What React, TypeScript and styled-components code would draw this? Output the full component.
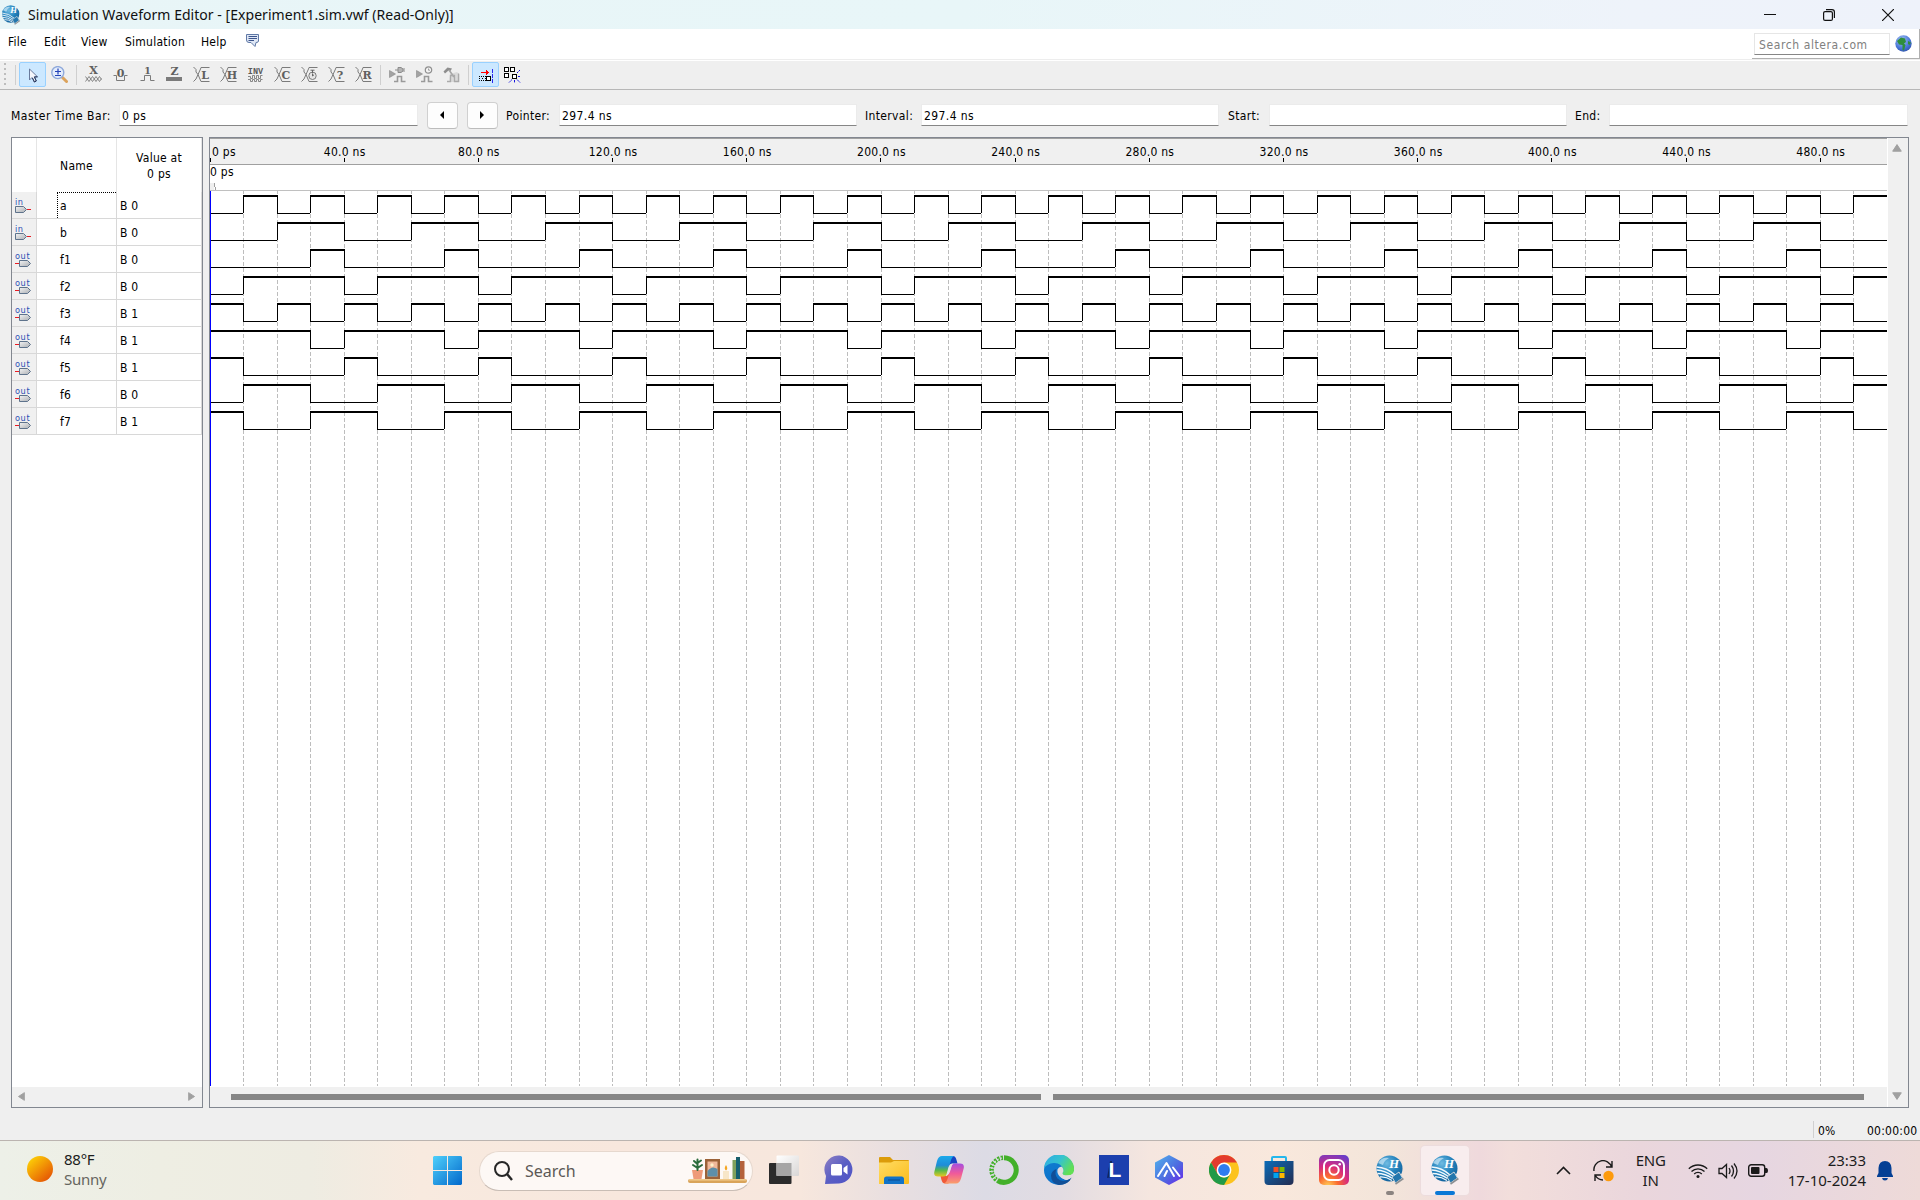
import React from "react";
import styled, { createGlobalStyle } from "styled-components";

const GlobalStyle = createGlobalStyle`
  * { box-sizing: border-box; }
  body { margin: 0; overflow: hidden; background: #efefef; }
  svg { display: block; flex: none; }
`;

const tahoma = `"DejaVu Sans Condensed", "DejaVu Sans", sans-serif`;
const segoe = `"Noto Sans", "Open Sans", sans-serif`;

const Screen = styled.div`
  width: 1920px;
  height: 1200px;
  display: flex;
  flex-direction: column;
  background: #efefef;
  color: #000;
  font: 12px/16px ${tahoma};
  letter-spacing: 0.25px;
  overflow: hidden;
  white-space: nowrap;
`;

/* ---------- title bar ---------- */
const TitleBar = styled.header`
  height: 29px;
  flex: none;
  display: flex;
  align-items: center;
  padding: 0 26px 0 1px;
  background: linear-gradient(90deg, #e8f5f7 0%, #e8f6f8 50%, #eef3fa 85%, #eef2fa 100%);
`;
const Title = styled.h1`
  margin: 0 auto 0 7px;
  font: 400 14px/20px ${segoe};
  letter-spacing: 0.04px;
  color: #101010;
`;
const WindowControls = styled.div`
  display: flex;
  gap: 47px;
`;

/* ---------- menu ---------- */
const MenuBar = styled.nav`
  height: 32px;
  flex: none;
  display: flex;
  align-items: flex-start;
  background: linear-gradient(#fff 30px, #ededed 30px, #ededed 31px, #fff 31px);
  padding-left: 8px;
`;
const MenuItem = styled.span<{ $w: number }>`
  width: ${(p) => p.$w}px;
  margin-top: 5px;
`;
const BubbleSlot = styled.span`
  margin-top: 4px;
`;
const AlteraSearch = styled.div`
  margin-left: auto;
  width: 168px;
  height: 30px;
  display: flex;
  align-items: center;
  padding-left: 2px;
  gap: 5px;
  border-right: 1px solid #b0b0b0;
  border-bottom: 1px solid #b0b0b0;
`;
const SearchField = styled.div`
  width: 136px;
  height: 22px;
  padding: 3px 4px;
  border: 1px solid #e6e6e6;
  border-bottom-color: #868686;
  color: #808080;
  letter-spacing: 0.6px;
`;

/* ---------- toolbar ---------- */
const ToolBar = styled.div`
  height: 29px;
  flex: none;
  display: flex;
  align-items: flex-start;
  padding: 1px 0 0 4px;
  border-bottom: 1px solid #b7b7b7;
`;
const Grip = styled.div`
  width: 2px;
  height: 24px;
  margin-top: 1px;
  background: repeating-linear-gradient(#bdbdbd 0 2px, transparent 2px 5px);
`;
const ToolSep = styled.div<{ $l: number; $r: number }>`
  width: 1px;
  height: 20px;
  margin: 3px ${(p) => p.$r}px 0 ${(p) => p.$l}px;
  background: #cfcfcf;
`;
const ToolButton = styled.button<{ $on?: boolean }>`
  width: 27px;
  height: 25px;
  padding: 0;
  display: flex;
  align-items: center;
  justify-content: center;
  border: 1px solid ${(p) => (p.$on ? "#99d1ff" : "transparent")};
  border-radius: 2px;
  background: ${(p) => (p.$on ? "#cce8ff" : "transparent")};
`;

/* ---------- time row ---------- */
const TimeRow = styled.div`
  height: 47px;
  flex: none;
  display: flex;
  align-items: center;
  padding: 4px 12px 0 11px;
`;
const TimeLabel = styled.label<{ $w: number; $ls?: number }>`
  width: ${(p) => p.$w}px;
  letter-spacing: ${(p) => p.$ls ?? 0.35}px;
`;
const TimeField = styled.div<{ $w: number }>`
  width: ${(p) => p.$w}px;
  height: 22px;
  padding: 3px 2px;
  background: #fff;
  border: 1px solid #ebebeb;
  border-bottom-color: #868686;
  margin-top: -1px;
  letter-spacing: 0.4px;
`;
const StepButton = styled.button`
  width: 31px;
  height: 27px;
  margin-left: 9px;
  padding: 0 2px 2px 0;
  display: flex;
  align-items: center;
  justify-content: center;
  background: #fdfdfd;
  border: 1px solid #d0d0d0;
  border-bottom-color: #bcbcbc;
  border-radius: 4px;
`;
const Gap = styled.span<{ $w: number }>`
  flex: 0 0 ${(p) => p.$w}px;
`;

/* ---------- work area ---------- */
const WorkArea = styled.main`
  flex: none;
  height: 971px;
  display: flex;
  gap: 6px;
  padding: 0 11px 0 11px;
`;
const SignalPanel = styled.section`
  width: 192px;
  flex: none;
  display: flex;
  flex-direction: column;
  background: #fff;
  border: 1px solid #828790;
`;
const SignalHead = styled.div`
  height: 54px;
  flex: none;
  display: grid;
  grid-template-columns: 25px 80px 85px;
`;
const HeadCell = styled.div`
  display: flex;
  align-items: center;
  justify-content: center;
  text-align: center;
  padding-top: 2px;
  border-right: 1px solid #e5e5e5;
`;
const SignalRow = styled.div`
  height: 27px;
  flex: none;
  display: grid;
  grid-template-columns: 25px 80px 85px;
`;
const IconCell = styled.div`
  background: #f0f0f0;
  border-right: 1px solid #d8d8d8;
  border-bottom: 1px solid #d8d8d8;
  padding: 5px 0 0 3px;
`;
const NameCell = styled.div<{ $focus?: boolean }>`
  border-right: 1px solid #d8d8d8;
  border-bottom: 1px solid #d8d8d8;
  padding-left: 20px;
  & > span {
    display: block;
    height: 26px;
    padding: ${(p) => (p.$focus ? "5px 0 0 2px" : "6px 0 0 3px")};
    border: 0 dotted #000;
    border-width: ${(p) => (p.$focus ? "1px 0 0 1px" : "0")};
  }
`;
const ValueCell = styled.div`
  border-right: 1px solid #d8d8d8;
  border-bottom: 1px solid #d8d8d8;
  padding: 6px 0 0 3px;
`;
const PanelScroll = styled.div`
  margin-top: auto;
  height: 20px;
  display: flex;
  align-items: center;
  justify-content: space-between;
  padding: 0 6px 1px 5px;
  background: #f0f0f0;
`;

const WavePanel = styled.section`
  flex: 1;
  display: flex;
  border: 1px solid #828790;
  background: #fff;
`;
const WaveMain = styled.div`
  width: 1677px;
  flex: none;
  display: flex;
  flex-direction: column;
`;
const Ruler = styled.div`
  height: 27px;
  flex: none;
  display: flex;
  overflow: hidden;
  background: #f0f0f0;
  border-top: 1px solid #a0a0a0;
  border-bottom: 1px solid #a0a0a0;
`;
const RulerCell = styled.div<{ $first?: boolean }>`
  flex: 0 0 ${(p) => (p.$first ? 67.1 : 134.2)}px;
  display: flex;
  flex-direction: column;
  align-items: ${(p) => (p.$first ? "flex-start" : "center")};
  padding-top: 5px;
  & > span {
    height: 14px;
    padding-left: ${(p) => (p.$first ? 2 : 1)}px;
  }
  & > i {
    width: 1px;
    height: 4px;
    background: #000;
  }
`;
const TimeBarStrip = styled.div`
  height: 26px;
  flex: none;
  display: flex;
  flex-direction: column;
  justify-content: space-between;
  border-bottom: 1px solid #c0c0c0;
  & > span {
    margin-top: -1px;
  }
`;
const ScrollTrack = styled.div`
  height: 20px;
  flex: none;
  margin-top: 1px;
  display: flex;
  align-items: center;
  gap: 12px;
  padding: 0 23px 1px 21px;
  background: #f0f0f0;
`;
const ScrollBar = styled.div<{ $w: number }>`
  width: ${(p) => p.$w}px;
  height: 6px;
  background: #868686;
`;
const VScroll = styled.div`
  flex: 1;
  margin-left: 1px;
  display: flex;
  flex-direction: column;
  justify-content: space-between;
  align-items: center;
  padding: 5px 2px 6px 0;
  background: #f0f0f0;
`;

/* ---------- status ---------- */
const StatusBar = styled.footer`
  height: 32px;
  flex: none;
  display: flex;
  justify-content: flex-end;
  align-items: flex-end;
  padding-bottom: 2px;
`;
const Percent = styled.div`
  width: 54px;
  height: 17px;
  padding-left: 4px;
  line-height: 21px;
  border-left: 1px solid #d0d0d0;
`;
const Clock = styled.div`
  width: 53px;
  height: 17px;
  line-height: 21px;
`;

/* ---------- taskbar ---------- */
const TaskBar = styled.div`
  height: 60px;
  flex: none;
  display: flex;
  align-items: center;
  border-top: 1px solid #bbb4b0;
  background: linear-gradient(
    90deg,
    #edf0e8 0px, #eeeee3 160px, #eeece2 310px, #f8eadf 420px, #f8e7dd 620px, #f7e7dd 800px,
    #e9dfe0 890px, #dcdbe5 985px, #e2dce2 1060px, #f5e6df 1150px, #f9e8dc 1280px,
    #f3e5da 1390px, #efd9dc 1480px, #f2dedb 1510px, #ead6dc 1640px, #e6d6e1 1760px, #eedad8 1920px
  );
  font: 15px/20px ${segoe};
  letter-spacing: 0;
`;
const Weather = styled.div`
  width: 433px;
  display: flex;
  align-items: center;
  gap: 11px;
  padding: 0 0 3px 27px;
`;
const TwoLine = styled.div<{ $align?: string; $dim?: boolean; $ls?: number }>`
  text-align: ${(p) => p.$align ?? "left"};
  line-height: 20px;
  color: #1c1c1c;
  letter-spacing: ${(p) => p.$ls ?? 0}px;
  margin-top: -1px;
  & > div:last-child {
    color: ${(p) => (p.$dim ? "#66665f" : "#1c1c1c")};
  }
`;
const SearchPill = styled.div`
  width: 274px;
  height: 40px;
  margin: 0 15px 0 17px;
  display: flex;
  align-items: center;
  padding: 0 5px 0 14px;
  border: 1px solid #e6d8ce;
  border-bottom-color: #c9bdb5;
  border-radius: 20px;
  background: #fdf8f5;
  font-size: 16px;
  color: #5c5856;
  & > span { margin: 0 auto 0 12px; }
`;
const Apps = styled.div`
  display: flex;
  gap: 7.050px;
  margin-left: -8px;
`;
const AppSlot = styled.div<{ $active?: boolean }>`
  width: 48px;
  height: 49px;
  padding-top: 9px;
  display: flex;
  flex-direction: column;
  align-items: center;
  justify-content: space-between;
  border-radius: 4px;
  background: ${(p) => (p.$active ? "#f8edee" : "transparent")};
  box-shadow: ${(p) => (p.$active ? "0 0 1px 1px #ecdcdd" : "none")};
`;
const Indicator = styled.div<{ $active?: boolean }>`
  width: ${(p) => (p.$active ? 20 : 8)}px;
  height: 4px;
  border-radius: 2px;
  background: ${(p) => (p.$active ? "#0a78d6" : "#8b8480")};
`;
const Tray = styled.div`
  margin-left: auto;
  padding-right: 27px;
  display: flex;
  align-items: center;
`;
const TrayIcon = styled.div<{ $r: number }>`
  margin-right: ${(p) => p.$r}px;
`;

/* ---------- icons ---------- */
const Quartus = ({ size }: { size: number }) => (
  <svg width={size} height={size} viewBox="0 0 30 30">
    <defs>
      <radialGradient id="qs" cx="0.4" cy="0.3" r="0.8">
        <stop offset="0" stopColor="#6fbbe2" />
        <stop offset="0.5" stopColor="#2583bd" />
        <stop offset="1" stopColor="#0e5a94" />
      </radialGradient>
    </defs>
    <circle cx="14.5" cy="13.5" r="13" fill="url(#qs)" />
    <path d="M1.600 12 Q12 12.500 20 20 M1.600 15 Q10 15.500 18.500 21.500 M2.500 18.500 Q10 18.500 17.500 23.500 M5 22 Q11 21.500 17 25.500" fill="none" stroke="#f2f9fd" strokeWidth="1.300" />
    <path d="M3 8 Q7 1.500 14 3 Q9 5.500 8 10 Z" fill="#c6e4f4" opacity=".75" />
    <text x="14" y="12.5" fontFamily="Liberation Serif" fontStyle="italic" fontWeight="bold" fontSize="13" fill="#fff">H</text>
    <path d="M17 22 L24 17 L27.500 23 L20.500 28 Z" fill="#2376ad" stroke="#cdd6db" strokeWidth="1" />
    <path d="M20.500 29 L28.400 23.500" stroke="#8b8f92" strokeWidth="1.600" />
  </svg>
);

const G = "#7b7b7b";
const Glyph = ({ x, y, size = 11, children }: { x: number; y: number; size?: number; children: string }) => (
  <text x={x} y={y} textAnchor="middle" fontFamily="DejaVu Serif" fontWeight="bold" fontSize={size} letterSpacing="0" fill="#606060">
    {children}
  </text>
);
const ToolSvg = ({ children }: { children: React.ReactNode }) => (
  <svg width="17" height="17" viewBox="0 0 17 17">{children}</svg>
);
const Cross = () => (
  <path d="M.5 1 L3 3.5 L3 6 L5 8.5 L8 15.5 M.5 15.5 L3 13 L5 8.5 L7.5 3 L8 1.5 H16.5 M8 15.5 H16.5" fill="none" stroke={G} />
);
const XIcon = ({ letter }: { letter: string }) => (
  <ToolSvg>
    <Cross />
    <Glyph x={12} y={12.5}>{letter}</Glyph>
  </ToolSvg>
);

const Cursor = () => (
  <svg width="17" height="17" viewBox="0 0 17 17">
    <path d="M5.5 3 V14 L8 11.5 L10.2 16 L12.3 15 L10.2 10.8 H13.5 Z" fill="#f4f6fb" stroke="#6a7a9c" />
    <path d="M8.5 12 L10.5 16 L12.3 15 L10.5 11 L13.5 10.8" fill="none" stroke="#26365c" />
  </svg>
);
const Zoom = () => (
  <svg width="17" height="17" viewBox="0 0 17 17">
    <path d="M11.5 11.5 L15.5 15.5" stroke="#dca35c" strokeWidth="3" strokeLinecap="round" />
    <circle cx="6.8" cy="6.6" r="6" fill="#e3ecfc" stroke="#8fa9da" strokeWidth="1.4" />
    <path d="M4 5.5 H10 M7 2.5 V8.5 M4 9.5 H10" stroke="#2242b8" strokeWidth="1.2" />
  </svg>
);
const ForceX = () => (
  <ToolSvg>
    <Glyph x={8.5} y={8}>X</Glyph>
    <path d="M.5 10.500 L4 15.500 L7.500 10.500 L11 15.500 L14.500 10.500 L16.500 13.500 M.5 15.500 L4 10.500 L7.500 15.500 L11 10.500 L14.500 15.500 L16.500 12.500" fill="none" stroke={G} strokeWidth=".9" />
  </ToolSvg>
);
const Force0 = () => (
  <ToolSvg>
    <path d="M1.5 9.5 H4.5 V14.5 H12.5 V9.5 H15.5" fill="none" stroke={G} />
    <Glyph x={8.5} y={10.5}>0</Glyph>
  </ToolSvg>
);
const Force1 = () => (
  <ToolSvg>
    <path d="M1.5 14.500 H5.500 V9.500 H11.500 V14.500 H15.500" fill="none" stroke={G} />
    <Glyph x={8.5} y={8} size={9.500}>1</Glyph>
  </ToolSvg>
);
const ForceZ = () => (
  <ToolSvg>
    <Glyph x={8.5} y={8.5}>Z</Glyph>
    <rect x="0" y="11" width="16" height="4" fill={G} />
  </ToolSvg>
);
const Invert = () => (
  <ToolSvg>
    <text x="8.5" y="7.5" textAnchor="middle" fontFamily="Liberation Mono" fontWeight="bold" fontSize="8.500" letterSpacing="0" fill="#5a5a5a">INV</text>
    <path d="M1 10.5 H3.5 V12.5 H5.5 V9.5 H7.5 V12.5 H9.5 V9.5 H11.5 V12.5 H13.5 V9.5 H15.5 M1 13.5 H3.5 V15.5 H5.5 V13.5 H7.5 V15.5 H9.5 V13.5 H11.5 V15.5 H13.5 V13.5 H15.5" fill="none" stroke={G} strokeWidth=".9" />
  </ToolSvg>
);
const ClockIcon = () => (
  <ToolSvg>
    <Cross />
    <circle cx="11.5" cy="9.8" r="3.7" fill="#e6e6e6" stroke={G} />
    <path d="M11.5 4 V7 M9.5 4.2 H13.5 M11.5 10 V7.5 M11.5 10 L13 8.8" stroke="#666" />
  </ToolSvg>
);
const SimRun = ({ kind }: { kind: "plug" | "clock" }) => (
  <ToolSvg>
    <path d="M.5 4.500 L6.500 8 L.5 11.500 Z" fill="#a3a3a3" stroke="#888" strokeWidth=".6" />
    <path d="M5 15.5 H8.5 V10.5 H12.5 V15.5 H16.5" fill="none" stroke="#9a9a9a" strokeWidth="1.6" />
    {kind === "plug" ? (
      <path d="M6 4 H9 M9 1.5 H12 L14 3 V5 L12 6.5 H9 Z M14 3 H16 M14 5 H16" fill="#b5b5b5" stroke="#8b8b8b" />
    ) : (
      <>
        <circle cx="12.5" cy="4" r="3.2" fill="#f3f3f3" stroke="#8f8f8f" strokeWidth="1.2" />
        <path d="M12.5 2.5 V4.2 H14" stroke="#8b8b8b" strokeWidth=".8" fill="none" />
      </>
    )}
  </ToolSvg>
);
const Hammer = () => (
  <ToolSvg>
    <path d="M7 8 L14 6 L16.5 8.5 V16 H6.5 V12" fill="#dadada" />
    <path d="M.5 5.5 L4.5 1.5 L9 2.5 L7.5 5 L5.5 4.5 L2 7.5 Z" fill="#8e8e8e" />
    <path d="M6 4 L11 11" stroke="#a5a5a5" strokeWidth="1.6" />
    <path d="M4 15.5 H7.5 V9.5 H11.5 V15.5 H15.5 V7.5" fill="none" stroke="#aaa" strokeWidth="1.3" />
  </ToolSvg>
);
const SnapEdge = () => (
  <svg width="17" height="17" viewBox="0 0 17 17" shapeRendering="crispEdges">
    <path d="M4 6.500 H11" stroke="#f00" />
    <path d="M9 4 L12 6.500 L9 9 Z" fill="#f00" />
    <path d="M2 10.500 H9 M2 14.500 H9" stroke="#000" strokeDasharray="1 1" />
    <path d="M2 12.500 H9" stroke="#000" strokeDasharray="1 2" />
    <rect x="9.500" y="10.500" width="4" height="4" fill="#fff" stroke="#000" />
    <path d="M15.500 3 V17" stroke="#2a2af0" strokeDasharray="4 1" />
  </svg>
);
const SnapGrid = () => (
  <svg width="17" height="17" viewBox="0 0 17 17">
    <g fill="#fff" stroke="#000">
      <rect x="0.5" y="1.5" width="4" height="4" />
      <rect x="6.5" y="1.5" width="4" height="4" />
      <rect x="0.5" y="7.5" width="4" height="4" />
      <rect x="8.5" y="8.5" width="4" height="4" />
    </g>
    <path d="M13 7 L16 4 M14 10.500 H16.500 M13 13.500 L16 16.500 M10.500 14 V17 M8 13.500 L5 16.500" stroke="#1212e0" fill="none" strokeDasharray="2 .6" />
  </svg>
);

const PinIcon = ({ dir }: { dir: "in" | "out" }) => (
  <svg width="18" height="18" viewBox="0 0 18 18">
    <defs>
      <linearGradient id="pin" x1="0" y1="0" x2="1" y2="1">
        <stop offset="0" stopColor="#f4f4f4" />
        <stop offset="1" stopColor="#a9adb2" />
      </linearGradient>
    </defs>
    <text x="0" y="8" fontFamily="DejaVu Sans" fontSize="8.200" letterSpacing={dir === "in" ? 0.5 : 0.6} fill="#2d4fb4">
      {dir}
    </text>
    {dir === "in" ? (
      <>
        <path d="M.5 9.500 H8.500 L11.500 12.500 L8.500 15.500 H.5 Z" fill="url(#pin)" stroke="#5e738c" />
        <path d="M12 12.500 H16" stroke="#e81c24" />
      </>
    ) : (
      <>
        <path d="M0 12.500 H4" stroke="#e81c24" />
        <path d="M4.500 9.500 H12.500 L15.500 12.500 L12.500 15.500 H4.500 Z" fill="url(#pin)" stroke="#5e738c" />
      </>
    )}
  </svg>
);

const Arrow = ({ dir, size = 9, color = "#a0a0a0" }: { dir: "left" | "right" | "up" | "down"; size?: number; color?: string }) => {
  const turn = { up: 0, right: 90, down: 180, left: 270 }[dir];
  return (
    <svg width={size} height={size} viewBox="0 0 10 10">
      <path d="M5 1.6 L9.3 8.2 H.7 Z" fill={color} stroke={color} strokeLinejoin="round" transform={`rotate(${turn} 5 5)`} />
    </svg>
  );
};
const StepArrow = ({ dir }: { dir: "left" | "right" }) => (
  <svg width="4" height="8" viewBox="0 0 4 8">
    <path d={dir === "left" ? "M4 0 V8 L0 4 Z" : "M0 0 V8 L4 4 Z"} fill="#000" />
  </svg>
);

/* ---------- waveforms ---------- */
const STEP = 33.55;
const SLOTS = 50;
const edge = (k: number) => (k >= SLOTS ? 1677 : Math.floor(k * STEP));

type Signal = { name: string; dir: "in" | "out"; value: string; cycle: string };
const signals: Signal[] = [
  { name: "a", dir: "in", value: "B 0", cycle: "0101" },
  { name: "b", dir: "in", value: "B 0", cycle: "0011" },
  { name: "f1", dir: "out", value: "B 0", cycle: "0001" },
  { name: "f2", dir: "out", value: "B 0", cycle: "0111" },
  { name: "f3", dir: "out", value: "B 1", cycle: "1010" },
  { name: "f4", dir: "out", value: "B 1", cycle: "1110" },
  { name: "f5", dir: "out", value: "B 1", cycle: "1000" },
  { name: "f6", dir: "out", value: "B 0", cycle: "0110" },
  { name: "f7", dir: "out", value: "B 1", cycle: "1001" },
];

const Trace = ({ cycle, top }: { cycle: string; top: number }) => {
  const parts: React.ReactNode[] = [];
  for (let k = 0; k < SLOTS; k++) {
    const high = cycle[k % 4] === "1";
    const x = edge(k);
    const w = edge(k + 1) - x;
    parts.push(<rect key={`l${k}`} x={x} y={high ? top : top + 18} width={w} height={high ? 2 : 1} />);
    if (k > 0 && cycle[(k - 1) % 4] !== cycle[k % 4]) {
      parts.push(<rect key={`e${k}`} x={x} y={top} width={1} height={18} />);
    }
  }
  return <g>{parts}</g>;
};

const WaveChart = () => (
  <svg width="1677" height="895" viewBox="0 0 1677 895" shapeRendering="crispEdges">
    {Array.from({ length: SLOTS - 1 }, (_, i) => (
      <path key={i} d={`M${edge(i + 1) + 0.5} -1 V895`} stroke="#bdbdbd" strokeDasharray="4 2" />
    ))}
    {signals.map((s, i) => (
      <Trace key={s.name} cycle={s.cycle} top={4 + i * 27} />
    ))}
    <rect x="0" y="0" width="1" height="895" fill="#0000ff" />
  </svg>
);

/* ---------- taskbar art ---------- */
const Art = ({ children }: { children: React.ReactNode }) => (
  <svg width="30" height="30" viewBox="0 0 30 30">{children}</svg>
);
const StartIcon = () => (
  <svg width="29" height="29" viewBox="0 0 29 29">
    <defs>
      <linearGradient id="win" gradientUnits="userSpaceOnUse" x1="0" y1="0" x2="29" y2="29">
        <stop offset="0" stopColor="#4fd0fb" />
        <stop offset="1" stopColor="#0268cb" />
      </linearGradient>
    </defs>
    <path d="M1 0 H14 V14 H0 V1 Z M15 0 H28 L29 1 V14 H15 Z M0 15 H14 V29 H1 L0 28 Z M15 15 H29 V28 L28 29 H15 Z" fill="url(#win)" />
  </svg>
);
const Shelf = () => (
  <svg width="59" height="27" viewBox="0 0 59 27">
    <rect x="0" y="22" width="59" height="4" rx="2" fill="#d9a45a" />
    <rect x="1" y="22" width="57" height="1.6" fill="#f0c98a" />
    <path d="M4 13 H15 L13.5 22 H5.5 Z" fill="#ee9a78" />
    <path d="M9.5 13 V2.500 M9.5 11 L5 8 M9.5 11 L14 8 M9.5 7 L6 4 M9.5 6 L13 3.500" stroke="#2a6b3b" strokeWidth="2" strokeLinecap="round" />
    <rect x="17" y="2" width="15" height="20" fill="#9b6238" />
    <rect x="19.5" y="4.5" width="10" height="15" fill="#f0b99a" />
    <path d="M19.5 14 Q24 8 29.5 12 V19.5 H19.5 Z" fill="#5d8fa8" />
    <circle cx="24" cy="8" r="1.7" fill="#fff0c8" />
    <rect x="35" y="14" width="6" height="8" fill="#f7e6c8" />
    <path d="M38 8 Q40.5 12 38 13.5 Q35.5 12 38 8" fill="#f5a623" />
    <rect x="44.5" y="3" width="3.5" height="19" fill="#7fa05a" />
    <rect x="48" y="0" width="4" height="22" fill="#175e6b" />
    <rect x="52" y="4" width="4.5" height="18" fill="#b4623c" />
  </svg>
);
const TaskView = () => (
  <Art>
    <defs>
      <linearGradient id="tv" x1="0" y1="0" x2="1" y2="1"><stop offset="0" stopColor="#fff" /><stop offset="1" stopColor="#d9d6d5" /></linearGradient>
    </defs>
    <rect x="0" y="8" width="22.5" height="21" rx="1" fill="#2b2b2b" />
    <rect x="7.5" y="0.5" width="22.5" height="20.5" rx="1" fill="url(#tv)" />
    <rect x="7.5" y="8" width="15" height="13" fill="#a6a5a5" />
  </Art>
);
const Chat = () => (
  <Art>
    <defs>
      <linearGradient id="ch" x1="0" y1="0" x2="1" y2="1"><stop offset="0" stopColor="#8f80c4" /><stop offset=".5" stopColor="#5a5fc4" /><stop offset="1" stopColor="#4f52c6" /></linearGradient>
    </defs>
    <path d="M1 29 L2 21 A14 14 0 1 1 15 28.5 Z" fill="url(#ch)" />
    <rect x="7" y="9" width="11" height="11.5" rx="1.5" fill="#fff" />
    <path d="M19.5 13 L23.5 10 V19.5 L19.5 16.5 Z" fill="#fff" />
  </Art>
);
const Explorer = () => (
  <Art>
    <defs>
      <linearGradient id="fx" x1="0" y1="0" x2="1" y2="1"><stop offset="0" stopColor="#ffdc63" /><stop offset="1" stopColor="#fbbc1c" /></linearGradient>
    </defs>
    <path d="M0 3 Q0 2 1 2 H11 L14 5 H29 Q30 5 30 6 V12 H0 Z" fill="#dc9c0a" />
    <path d="M0 7.5 H12 L15 6 H30 V28 Q30 29 29 29 H0 Z" fill="url(#fx)" />
    <path d="M5 29 V24 Q5 21.500 7.500 21.500 H22.500 Q25 21.500 25 24 V29 Z" fill="#1273c8" />
    <path d="M9 25 H21" stroke="#0a4c8e" />
  </Art>
);
const Copilot = () => (
  <Art>
    <defs>
      <linearGradient id="c1" x1="0" y1="0" x2="0" y2="1"><stop offset="0" stopColor="#1ba9ea" /><stop offset=".45" stopColor="#1f8cd8" /><stop offset=".7" stopColor="#58b94a" /><stop offset="1" stopColor="#e5c823" /></linearGradient>
      <linearGradient id="c2" x1="0" y1="0" x2="0" y2="1"><stop offset="0" stopColor="#a54ee0" /><stop offset=".5" stopColor="#f05a9a" /><stop offset="1" stopColor="#fb9e68" /></linearGradient>
    </defs>
    <path d="M15 1 H19 Q21.500 1 22.500 5 L23.500 8.500 H18 Q15.500 9 14.500 12 Z" fill="#1845c4" />
    <path d="M14.500 28.500 H11 Q8.500 28.500 7.500 25 L6.500 21 H12 Q14.500 20 16 17 Z" fill="#f05a38" />
    <path d="M8 1 H20 Q18 2 17 5 L13.500 18 Q12.500 21.500 9 21.500 H4 Q-.5 21.500 .3 17 L3 6 Q4.500 1 8 1 Z" fill="url(#c1)" />
    <path d="M22 28.500 H10 Q12.500 27.500 13.500 24 L17 12 Q18 8.500 21 8.500 H26 Q30.500 8.500 29.800 13 L27 23.500 Q25.500 28.500 22 28.500 Z" fill="url(#c2)" />
    <path d="M14.500 12 Q15.500 9 18.500 8.600 L16 16.500 Q15 20 12 21.200 Z" fill="#e6dfe6" />
  </Art>
);
const Anaconda = () => (
  <Art>
    <path d="M15 2.700 A12.300 12.300 0 1 1 8.500 25.500" fill="none" stroke="#43b02a" strokeWidth="5" />
    <path d="M14 2.700 A12.300 12.300 0 0 0 8.500 25.500" fill="none" stroke="#43b02a" strokeWidth="4.500" strokeDasharray="2.200 1.200" />
    <path d="M13 3 A12 12 0 0 0 7 24" fill="none" stroke="#dcdbe5" strokeWidth="1.200" strokeDasharray="2 1.500" />
  </Art>
);
const Edge = () => (
  <Art>
    <defs>
      <linearGradient id="e1" x1="0" y1="0" x2="1" y2=".5"><stop offset="0" stopColor="#2fa9e6" /><stop offset=".55" stopColor="#35c3cf" /><stop offset="1" stopColor="#62df55" /></linearGradient>
      <linearGradient id="e2" x1="0" y1="0" x2=".5" y2="1"><stop offset="0" stopColor="#1180d2" /><stop offset="1" stopColor="#0c6fc9" /></linearGradient>
    </defs>
    <circle cx="15" cy="15" r="15" fill="url(#e2)" />
    <path d="M30 16 V24 L25 25 Q22 26 18 23 L17 19 Z" fill="#e2dce1" />
    <path d="M0 13.500 A15 15 0 0 1 30 15 Q30 20.500 23 20.500 Q18.500 20.500 18 18.500 Q19.500 17 19 14.500 Q17.500 7.500 9.500 8 Q3 8.500 0 13.500 Z" fill="url(#e1)" />
    <path d="M12.500 14 Q10 19 13.500 23.500 Q19 29 28 22 Q24 30 15 30 Q7 28.500 7 20.500 Q7.500 15.500 12.500 14 Z" fill="#114f97" />
    <path d="M18 11.800 Q20.500 15.500 18.500 18.200 Q18.500 20.500 23 20.500 Q27 20.500 29.500 18.500 L28 22.500 Q22.500 26 17.500 23 Q12.500 19.500 13.500 14.500 Q15 11 18 11.800 Z" fill="#e2dce1" />
  </Art>
);
const LIcon = () => (
  <Art>
    <rect width="30" height="30" fill="#1c3fae" />
    <path d="M11 6 L8 23 L13 22 V6 Z" fill="#10265f" />
    <text x="9.500" y="21.600" fontFamily="Liberation Sans" fontWeight="bold" fontSize="21" fill="#fff">L</text>
  </Art>
);
const Hexagon = () => (
  <Art>
    <defs>
      <linearGradient id="hx" x1="0" y1="0" x2="1" y2="1"><stop offset="0" stopColor="#52b4ec" /><stop offset=".55" stopColor="#4d6de0" /><stop offset="1" stopColor="#6b22ea" /></linearGradient>
    </defs>
    <path d="M15 0 L29 7.500 V22.500 L15 30 L1 22.500 V7.500 Z" fill="url(#hx)" />
    <path d="M4 21 L12.500 8 L20 21 M10.500 21 L13 16 M19 12.500 L25.500 21" fill="none" stroke="#fff" strokeWidth="2" strokeLinecap="round" strokeLinejoin="round" />
  </Art>
);
const Chrome = () => (
  <Art>
    <circle cx="15" cy="15" r="15" fill="#fcc31e" />
    <path d="M15 0 A15 15 0 0 1 28 7.500 H15 L8.500 18.700 L2 7.500 A15 15 0 0 1 15 0" fill="#e33b2e" />
    <path d="M2 7.500 L8.500 18.800 A7.500 7.500 0 0 0 21.500 18.700 L15 30 A15 15 0 0 1 2 7.500" fill="#219a48" />
    <circle cx="15" cy="15" r="7.400" fill="#fff" />
    <circle cx="15" cy="15" r="5.900" fill="#2f7cf0" />
  </Art>
);
const Store = () => (
  <Art>
    <defs>
      <linearGradient id="st" x1="0" y1="0" x2="1" y2="1"><stop offset="0" stopColor="#0b6cb8" /><stop offset="1" stopColor="#242c50" /></linearGradient>
    </defs>
    <path d="M8 8 V3 Q8 2 9 2 H21 Q22 2 22 3 V8" fill="none" stroke="#25b7ec" strokeWidth="2" />
    <path d="M.5 6 H29.500 V26 Q29.500 30 25.500 30 H4.500 Q.5 30 .5 26 Z" fill="url(#st)" />
    <rect x="9.500" y="12" width="5" height="5" fill="#f25022" />
    <rect x="15.500" y="12" width="5" height="5" fill="#7fba00" />
    <rect x="9.500" y="18" width="5" height="5" fill="#00a4ef" />
    <rect x="15.500" y="18" width="5" height="5" fill="#ffb900" />
  </Art>
);
const Instagram = () => (
  <Art>
    <defs>
      <radialGradient id="ig" cx=".3" cy="1.050" r="1.150"><stop offset="0" stopColor="#ffd55a" /><stop offset=".3" stopColor="#fb6a2e" /><stop offset=".6" stopColor="#d62a80" /><stop offset="1" stopColor="#6a3cc8" /></radialGradient>
    </defs>
    <rect width="30" height="30" rx="5" fill="url(#ig)" />
    <rect x="5" y="5" width="20" height="20" rx="5.500" fill="none" stroke="#fff" strokeWidth="2" />
    <circle cx="15" cy="15" r="4.700" fill="none" stroke="#fff" strokeWidth="2" />
    <circle cx="20.700" cy="9.300" r="1.300" fill="#fff" />
  </Art>
);

const apps: { icon: React.ReactNode; state?: "open" | "active" }[] = [
  { icon: <TaskView /> },
  { icon: <Chat /> },
  { icon: <Explorer /> },
  { icon: <Copilot /> },
  { icon: <Anaconda /> },
  { icon: <Edge /> },
  { icon: <LIcon /> },
  { icon: <Hexagon /> },
  { icon: <Chrome /> },
  { icon: <Store /> },
  { icon: <Instagram /> },
  { icon: <Quartus size={30} />, state: "open" },
  { icon: <Quartus size={30} />, state: "active" },
];

const edits: React.ReactNode[] = [
  <ForceX />, <Force0 />, <Force1 />, <ForceZ />, <XIcon letter="L" />, <XIcon letter="H" />, <Invert />,
  <XIcon letter="C" />, <ClockIcon />, <XIcon letter="?" />, <XIcon letter="R" />,
];

export default function App() {
  return (
    <Screen>
      <GlobalStyle />
      <TitleBar>
        <Quartus size={20} />
        <Title>Simulation Waveform Editor - [Experiment1.sim.vwf (Read-Only)]</Title>
        <WindowControls>
          <svg width="12" height="12"><path d="M0 5.500 H12" stroke="#111" /></svg>
          <svg width="12" height="12" fill="none" stroke="#111" strokeWidth="1.200">
            <rect x=".6" y="2.600" width="8.800" height="8.800" rx="1.500" />
            <path d="M3 .6 H9 Q11.400 .6 11.400 3 V9" />
          </svg>
          <svg width="12" height="12"><path d="M0 0 L12 12 M12 0 L0 12" stroke="#111" strokeWidth="1.200" /></svg>
        </WindowControls>
      </TitleBar>

      <MenuBar>
        <MenuItem $w={36}>File</MenuItem>
        <MenuItem $w={37}>Edit</MenuItem>
        <MenuItem $w={44}>View</MenuItem>
        <MenuItem $w={76}>Simulation</MenuItem>
        <MenuItem $w={44}>Help</MenuItem>
        <BubbleSlot>
          <svg width="15" height="15" viewBox="0 0 15 15">
            <path d="M1.500 1.500 H13.500 V8 Q13.500 9.500 11 9.500 L10 13.500 L6 9.500 H4 Q1.500 9.500 1.500 7 Z" fill="#dfe7f5" stroke="#6079a6" />
            <path d="M3.500 3.500 H12 M3.500 5.500 H12 M3.500 7.500 H9" stroke="#3c558c" />
          </svg>
        </BubbleSlot>
        <AlteraSearch>
          <SearchField>Search altera.com</SearchField>
          <svg width="17" height="17" viewBox="0 0 17 17">
            <defs>
              <radialGradient id="gl" cx=".4" cy=".3" r=".8"><stop offset="0" stopColor="#a9c6f6" /><stop offset=".6" stopColor="#4a78d8" /><stop offset="1" stopColor="#2a4ba4" /></radialGradient>
            </defs>
            <circle cx="8.500" cy="8.500" r="8.200" fill="url(#gl)" />
            <path d="M2 6 L6 2.500 L10 3.500 L11 7 L9 8.500 L10.500 10 L9 15.500 L7.500 15 L7.500 10 L4 9.500 Z M13 6 L16 7.500 L14.500 10 L13 9 Z" fill="#2f8e3c" />
          </svg>
        </AlteraSearch>
      </MenuBar>

      <ToolBar>
        <Grip />
        <ToolSep $l={9} $r={3} />
        <ToolButton $on><Cursor /></ToolButton>
        <ToolButton><Zoom /></ToolButton>
        <ToolSep $l={3} $r={3} />
        {edits.map((icon, i) => (
          <ToolButton key={i}>{icon}</ToolButton>
        ))}
        <ToolSep $l={3} $r={3} />
        <ToolButton><SimRun kind="plug" /></ToolButton>
        <ToolButton><SimRun kind="clock" /></ToolButton>
        <ToolButton><Hammer /></ToolButton>
        <ToolSep $l={3} $r={3} />
        <ToolButton $on><SnapEdge /></ToolButton>
        <ToolButton><SnapGrid /></ToolButton>
      </ToolBar>

      <TimeRow>
        <TimeLabel $w={108} $ls={0.5}>Master Time Bar:</TimeLabel>
        <TimeField $w={299}>0 ps</TimeField>
        <StepButton><StepArrow dir="left" /></StepButton>
        <StepButton><StepArrow dir="right" /></StepButton>
        <Gap $w={8} />
        <TimeLabel $w={53}>Pointer:</TimeLabel>
        <TimeField $w={298}>297.4 ns</TimeField>
        <Gap $w={8} />
        <TimeLabel $w={56}>Interval:</TimeLabel>
        <TimeField $w={298}>297.4 ns</TimeField>
        <Gap $w={9} />
        <TimeLabel $w={41}>Start:</TimeLabel>
        <TimeField $w={298} />
        <Gap $w={8} />
        <TimeLabel $w={34}>End:</TimeLabel>
        <TimeField $w={299} />
      </TimeRow>

      <WorkArea>
        <SignalPanel>
          <SignalHead>
            <HeadCell />
            <HeadCell>Name</HeadCell>
            <HeadCell>Value at<br />0 ps</HeadCell>
          </SignalHead>
          {signals.map((s, i) => (
            <SignalRow key={s.name}>
              <IconCell><PinIcon dir={s.dir} /></IconCell>
              <NameCell $focus={i === 0}><span>{s.name}</span></NameCell>
              <ValueCell>{s.value}</ValueCell>
            </SignalRow>
          ))}
          <PanelScroll>
            <Arrow dir="left" />
            <Arrow dir="right" />
          </PanelScroll>
        </SignalPanel>

        <WavePanel>
          <WaveMain>
            <Ruler>
              <RulerCell $first><span>0 ps</span><i /></RulerCell>
              {Array.from({ length: 12 }, (_, i) => (
                <RulerCell key={i}><span>{(i + 1) * 40}.0 ns</span><i /></RulerCell>
              ))}
            </Ruler>
            <TimeBarStrip>
              <span>0 ps</span>
              <svg width="6" height="7" shapeRendering="crispEdges">
                <rect width="4" height="7" fill="#efefef" />
                <path d="M4.500 0 V4 M5.500 4 V7" stroke="#a0a0a0" />
              </svg>
            </TimeBarStrip>
            <WaveChart />
            <ScrollTrack>
              <ScrollBar $w={810} />
              <ScrollBar $w={811} />
            </ScrollTrack>
          </WaveMain>
          <VScroll>
            <Arrow dir="up" size={10} />
            <Arrow dir="down" size={10} />
          </VScroll>
        </WavePanel>
      </WorkArea>

      <StatusBar>
        <Percent>0%</Percent>
        <Clock>00:00:00</Clock>
      </StatusBar>

      <TaskBar>
        <Weather>
          <svg width="26" height="26" viewBox="0 0 26 26">
            <defs>
              <linearGradient id="sun" x1=".1" y1=".1" x2=".8" y2=".9"><stop offset="0" stopColor="#fdd006" /><stop offset="1" stopColor="#e65a05" /></linearGradient>
            </defs>
            <circle cx="13" cy="13" r="13" fill="url(#sun)" />
          </svg>
          <TwoLine $dim $ls={-0.25}><div>88°F</div><div>Sunny</div></TwoLine>
        </Weather>
        <StartIcon />
        <SearchPill>
          <svg width="19" height="20" viewBox="0 0 19 20" fill="none" stroke="#262626">
            <circle cx="8" cy="8" r="7" strokeWidth="2" />
            <path d="M13 13 L18 19" strokeWidth="2.400" />
          </svg>
          <span>Search</span>
          <Shelf />
        </SearchPill>
        <Apps>
          {apps.map((a, i) => (
            <AppSlot key={i} $active={a.state === "active"}>
              {a.icon}
              {a.state && <Indicator $active={a.state === "active"} />}
            </AppSlot>
          ))}
        </Apps>
        <Tray>
          <TrayIcon $r={22}>
            <svg width="15" height="9"><path d="M1 8 L7.500 1.500 L14 8" fill="none" stroke="#1a1a1a" strokeWidth="1.600" /></svg>
          </TrayIcon>
          <TrayIcon $r={22}>
            <svg width="21" height="22" viewBox="0 0 21 22" fill="none" stroke="#1a1a1a" strokeWidth="1.400">
              <path d="M1 11 A9 9 0 0 1 18.500 7 M19 1 V7 H13 M2 21 V15 H8 M2 15 Q5 20 10 20" />
              <circle cx="15.500" cy="16" r="5.200" fill="#fd9a0c" stroke="none" />
            </svg>
          </TrayIcon>
          <TrayIcon $r={22}>
            <TwoLine $align="center" $ls={-0.2}><div>ENG</div><div>IN</div></TwoLine>
          </TrayIcon>
          <TrayIcon $r={10}>
            <svg width="20" height="16" viewBox="0 0 20 16" fill="none" stroke="#1a1a1a" strokeWidth="1.300">
              <path d="M.8 5.800 A13 13 0 0 1 19.200 5.800 M3.500 8.500 A9.200 9.200 0 0 1 16.500 8.500 M6.200 11 A5.400 5.400 0 0 1 13.800 11" />
              <circle cx="10" cy="13.600" r="1.500" fill="#1a1a1a" stroke="none" />
            </svg>
          </TrayIcon>
          <TrayIcon $r={10}>
            <svg width="20" height="18" viewBox="0 0 20 18" fill="none" stroke="#1a1a1a" strokeWidth="1.300">
              <path d="M1 6.500 H4 L8.500 2.500 V15.500 L4 11.500 H1 Z M11 6 Q13 9 11 12 M13.500 3.500 Q17.500 9 13.500 14.500 M16 1.500 Q22 9 16 16.500" />
            </svg>
          </TrayIcon>
          <TrayIcon $r={20}>
            <svg width="20" height="13" viewBox="0 0 20 13">
              <rect x=".7" y=".7" width="16" height="11.600" rx="2.500" fill="none" stroke="#1a1a1a" strokeWidth="1.400" />
              <rect x="3" y="3" width="8.500" height="7" rx="1" fill="#1a1a1a" />
              <path d="M17 4 H18.500 Q20 4 20 6.500 Q20 9 18.500 9 H17 Z" fill="#1a1a1a" />
            </svg>
          </TrayIcon>
          <TrayIcon $r={11}>
            <TwoLine $align="right"><div>23:33</div><div>17-10-2024</div></TwoLine>
          </TrayIcon>
          <svg width="16" height="20" viewBox="0 0 16 20">
            <path d="M8 0 Q14 0 14.500 7 V12 L16 15 V16 H0 V15 L1.500 12 V7 Q2 0 8 0 Z M5 17 H11 Q10.500 19.500 8 19.500 Q5.500 19.500 5 17 Z" fill="#043f94" />
          </svg>
        </Tray>
      </TaskBar>
    </Screen>
  );
}
